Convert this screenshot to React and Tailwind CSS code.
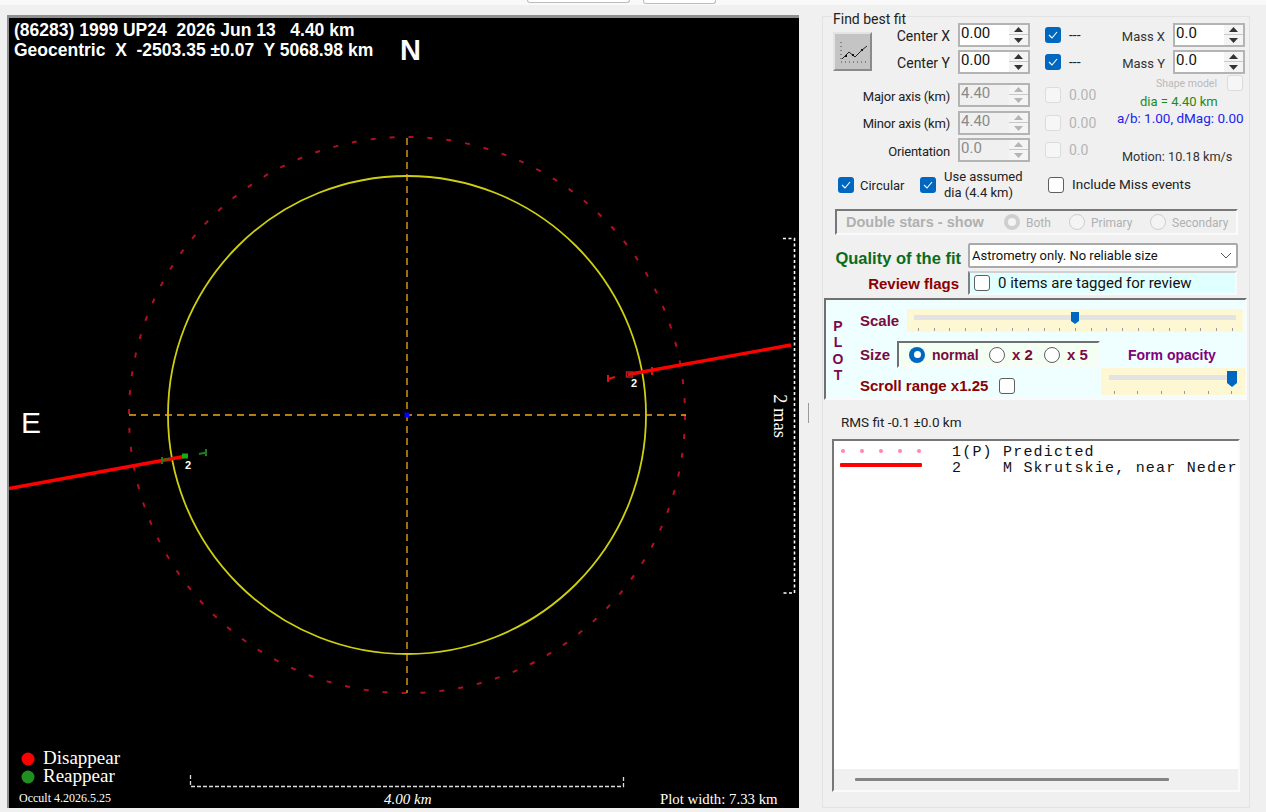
const UI = "font-['Roboto','Noto_Sans',sans-serif]"
const ARIAL = "font-['Liberation_Sans',Arial,sans-serif]"
const SERIF = "font-['Liberation_Serif','Times_New_Roman',serif]"

function Arrows({ disabled }) {
  const fill = disabled ? '#b5b5b5' : '#333'
  return (
    <div className="flex h-full w-[19px] shrink-0 flex-col items-center justify-center gap-[1px] bg-[#f4f4f4]">
      <div className="flex h-[10px] w-full items-center justify-center border-b border-[#c8c8c8]">
        <svg width="9" height="5" viewBox="0 0 9 5"><path d="M4.5 0 9 5H0z" fill={fill} /></svg>
      </div>
      <div className="flex h-[9px] w-full items-center justify-center">
        <svg width="9" height="5" viewBox="0 0 9 5"><path d="M4.5 5 9 0H0z" fill={fill} /></svg>
      </div>
    </div>
  )
}

function Spin({ value, disabled }) {
  return (
    <div className={`flex h-[24px] w-[72px] shrink-0 items-center border-2 border-[#b4b4b4] ${disabled ? 'bg-[#f0f0f0] text-[#8a8a8a]' : 'bg-white text-[#111]'}`}>
      <span className="-mt-[3px] flex-1 pl-[1px] text-[15px] leading-none">{value}</span>
      <Arrows disabled={disabled} />
    </div>
  )
}

function Check({ checked, disabled }) {
  if (checked) {
    return (
      <div className="flex h-[16px] w-[16px] shrink-0 items-center justify-center rounded-[3px] bg-[#0067c0]">
        <svg width="10" height="8" viewBox="0 0 10 8"><path d="M1 4l3 3 5-6" fill="none" stroke="#fff" strokeWidth="1.1" /></svg>
      </div>
    )
  }
  return <div className={`h-[16px] w-[16px] shrink-0 rounded-[3px] border ${disabled ? 'border-[#dcdcdc] bg-[#f6f6f6]' : 'border-[#5f5f5f] bg-white'}`} />
}

function Radio({ checked, disabled }) {
  if (checked && disabled) {
    return (
      <div className="flex h-[16px] w-[16px] shrink-0 items-center justify-center rounded-full bg-[#cfcfcf]">
        <div className="h-[8px] w-[8px] rounded-full bg-[#f4f4f4]" />
      </div>
    )
  }
  if (checked) {
    return (
      <div className="flex h-[16px] w-[16px] shrink-0 items-center justify-center rounded-full bg-[#0067c0]">
        <div className="h-[7px] w-[7px] rounded-full bg-white" />
      </div>
    )
  }
  return <div className={`h-[16px] w-[16px] shrink-0 rounded-full border ${disabled ? 'border-[#cfcfcf] bg-[#f4f4f4]' : 'border-[#5f5f5f] bg-white'}`} />
}

function SpinRow({ label, value, disabled, checked, note }) {
  return (
    <div className="flex h-[24px] items-center">
      <span className="mt-[2px] w-[127px] shrink-0 text-right text-[13px] leading-none tracking-[-0.2px] text-[#222]">{label}</span>
      <div className="ml-[8px]"><Spin value={value} disabled={disabled} /></div>
      <div className="ml-[15px]"><Check checked={checked} disabled={disabled} /></div>
      <span className={`ml-[8px] text-[14px] leading-none ${disabled ? 'text-[#b5b5b5]' : 'text-[#222]'}`}>{note}</span>
    </div>
  )
}

function Slider({ className, trackClass, thumbClass, ticks, tickClass, tall }) {
  return (
    <div className={`relative bg-[#fdf7d3] ${className}`}>
      <div className={`absolute h-[5px] bg-[#e3e3e3] ${trackClass}`} />
      <svg className={`absolute ${thumbClass}`} width={tall ? 10 : 8} height={tall ? 16 : 12} viewBox="0 0 8 12" preserveAspectRatio="none">
        <path d="M0 0h8v9l-4 3-4-3z" fill="#0067c0" />
      </svg>
      <div className={`absolute flex justify-between ${tickClass}`}>
        {Array.from({ length: ticks }).map((_, i) => <div key={i} className="h-[3px] w-[1px] bg-[#9a9a9a]" />)}
      </div>
    </div>
  )
}

function PlotCanvas() {
  return (
    <div className="relative h-[790px] w-[790px] bg-black">
      <svg className="absolute inset-0" width="790" height="790" viewBox="9 18 790 790">
        <circle cx="407" cy="415" r="278" fill="none" stroke="#b01020" strokeWidth="2" strokeDasharray="5 14" />
        <circle cx="407" cy="415" r="239" fill="none" stroke="#cfcf10" strokeWidth="1.8" />
        <path d="M407 138V693" stroke="#f0a81c" strokeWidth="1.3" strokeDasharray="7 5" />
        <path d="M129 415H686" stroke="#f0a81c" strokeWidth="1.3" strokeDasharray="7 5" />
        <rect x="404.500" y="412.500" width="5" height="5" fill="#0000ff" />
        <path d="M628 374.500 791 345" stroke="#f00" strokeWidth="3.4" />
        <path d="M9 488.500 184 456.500" stroke="#f00" strokeWidth="3.4" />
        <rect x="626.500" y="372" width="6" height="5" fill="none" stroke="#b02020" strokeWidth="1.500" />
        <path d="M652 367v8M608 375v7M608 379l7-2" stroke="#e01010" strokeWidth="2" fill="none" />
        <rect x="182" y="453.500" width="6" height="5" fill="#10b010" />
        <path d="M162 457v7M162 460l7-1M206 449v7M199 454l7-1.500" stroke="#1c7c1c" strokeWidth="2" fill="none" />
        <path d="M783 238.500h11.500V593H783" fill="none" stroke="#fff" strokeWidth="1.600" strokeDasharray="3 2.500" />
        <path d="M190.500 775v11.500H623.500V775" fill="none" stroke="#ddd" strokeWidth="1.300" strokeDasharray="4 2" />
        <circle cx="28" cy="759" r="6.500" fill="#f00" />
        <circle cx="28" cy="777" r="6.500" fill="#1f8f1f" />
      </svg>

      <div className={`absolute left-[5px] top-[2px] whitespace-pre text-[17.500px] font-bold leading-[20px] text-white ${ARIAL}`}>
        {'(86283) 1999 UP24  2026 Jun 13   4.40 km\nGeocentric  X  -2503.35 ±0.07  Y 5068.98 km'}
      </div>
      <div className={`absolute left-[391px] top-[16px] text-[29px] font-bold leading-[32px] text-white ${ARIAL}`}>N</div>
      <div className={`absolute left-[12px] top-[389px] text-[30px] leading-[32px] text-white ${ARIAL}`}>E</div>
      <div className={`absolute left-[176px] top-[440px] text-[11px] font-bold leading-[14px] text-white ${ARIAL}`}>2</div>
      <div className={`absolute left-[622px] top-[358px] text-[11px] font-bold leading-[14px] text-white ${ARIAL}`}>2</div>
      <div className={`absolute left-[749px] top-[388px] origin-center rotate-90 whitespace-nowrap text-[18.500px] leading-[20px] text-white ${SERIF}`}>2 mas</div>
      <div className={`absolute left-[34px] top-[731px] text-[19px] leading-[18px] text-white ${SERIF}`}>Disappear</div>
      <div className={`absolute left-[34px] top-[749px] text-[19px] leading-[18px] text-white ${SERIF}`}>Reappear</div>
      <div className={`absolute left-[10px] top-[773px] text-[12px] leading-[14px] text-white ${SERIF}`}>Occult 4.2026.5.25</div>
      <div className={`absolute left-[375px] top-[773px] text-[15px] italic leading-[16px] text-white ${SERIF}`}>4.00 km</div>
      <div className={`absolute left-[651px] top-[773px] text-[14.800px] leading-[16px] text-white ${SERIF}`}>Plot width: 7.33 km</div>
    </div>
  )
}

function FitControls() {
  return (
    <div className="flex pt-[6px]">
      <div className="w-[277px] shrink-0">
        <div className="flex">
          <button className="ml-[10px] mt-[9px] flex h-[39px] w-[39px] shrink-0 items-center justify-center border-2 border-b-[#8a8a8a] border-l-[#e4e4e4] border-r-[#8a8a8a] border-t-[#e4e4e4] bg-[#c4c4c4]">
            <svg width="31" height="31" viewBox="0 0 31 31">
              <path d="M4 6v20M4 26h27" stroke="#444" strokeWidth="1" strokeDasharray="1 3" fill="none" />
              <path d="M5 23l7-7 6 5 7-7 5-4" stroke="#222" strokeWidth="1" fill="none" />
              <path d="M8 19h2v2H8zM15 18h2v2h-2zM24 13h2v2h-2z" fill="#111" />
            </svg>
          </button>
          <div className="flex flex-col gap-[3px]">
            {['Center X', 'Center Y'].map(label => (
              <div key={label} className="flex h-[24px] items-center">
                <span className="mt-[2px] w-[78px] shrink-0 text-right text-[14px] leading-none text-[#222]">{label}</span>
                <div className="ml-[8px]"><Spin value="0.00" /></div>
                <div className="ml-[15px]"><Check checked /></div>
                <span className="ml-[8px] text-[14px] leading-none text-[#222]">---</span>
              </div>
            ))}
          </div>
        </div>
        <div className="mt-[9px] flex flex-col gap-[3.500px]">
          <SpinRow label="Major axis (km)" value="4.40" disabled note="0.00" />
          <SpinRow label="Minor axis (km)" value="4.40" disabled note="0.00" />
          <SpinRow label="Orientation" value="0.0" disabled note="0.0" />
        </div>
      </div>

      <div className="flex-1">
        <div className="flex flex-col gap-[3px]">
          {['Mass X', 'Mass Y'].map(label => (
            <div key={label} className="flex h-[24px] items-center">
              <span className="mt-[3px] w-[65px] shrink-0 text-right text-[13px] leading-none text-[#333]">{label}</span>
              <div className="ml-[8px]"><Spin value="0.0" /></div>
            </div>
          ))}
        </div>
        <div className="mt-[1px] flex h-[16px] items-center">
          <span className="mt-[2px] w-[117px] text-right text-[10.500px] leading-none text-[#b9b9b9]">Shape model</span>
          <div className="ml-[10px]"><Check disabled /></div>
        </div>
        <div className="ml-[40px] mt-[2px] h-[17px] text-[13px] leading-[17px] text-[#1a8a1a]">dia = 4.40 km</div>
        <div className="ml-[17px] h-[17px] whitespace-nowrap text-[13.500px] leading-[17px] text-[#2222ee]">a/b: 1.00, dMag: 0.00</div>
        <div className="ml-[22px] mt-[21px] h-[14px] whitespace-nowrap text-[12.700px] leading-[17px] text-[#333]">Motion: 10.18 km/s</div>
      </div>
    </div>
  )
}

function DoubleStars() {
  return (
    <div className="ml-[12px] mt-[9px] flex h-[26px] w-[403px] items-center border-2 border-b-[#fafafa] border-l-[#777] border-r-[#fafafa] border-t-[#777] text-[#b0b0b0]">
      <span className={`ml-[9px] w-[148px] shrink-0 text-[14.500px] font-bold leading-none ${ARIAL}`}>Double stars - show</span>
      <div className="ml-[10px]"><Radio checked disabled /></div>
      <span className="ml-[6px] mt-[2px] w-[43px] text-[12px] leading-none">Both</span>
      <Radio disabled />
      <span className="ml-[6px] mt-[2px] w-[59px] text-[12px] leading-none">Primary</span>
      <Radio disabled />
      <span className="ml-[6px] mt-[2px] text-[12px] leading-none">Secondary</span>
    </div>
  )
}

function PlotPanel() {
  return (
    <div className={`ml-[1px] mt-[3px] flex h-[102px] w-[423px] border-2 border-b-[#fafafa] border-l-[#707070] border-r-[#fafafa] border-t-[#707070] bg-[#efffff] ${ARIAL}`}>
      <div className="ml-[7px] mt-[18px] flex w-[10px] flex-col items-center text-[14px] font-bold leading-[16.300px] text-[#7a0a55]">
        <span>P</span><span>L</span><span>O</span><span>T</span>
      </div>
      <div className="ml-[17px] flex-1">
        <div className="mt-[9px] flex h-[23px]">
          <span className="mt-[4px] w-[47px] text-[15px] font-bold leading-[16px] text-[#7a0a40]">Scale</span>
          <Slider className="h-[23px] w-[336px]" trackClass="left-[7px] top-[6px] w-[322px]" thumbClass="left-[164px] top-[3px]" ticks={21} tickClass="left-[11px] right-[10px] top-[19px]" />
        </div>
        <div className="mt-[9px] flex h-[27px] items-center">
          <span className="w-[37px] text-[15px] font-bold leading-[16px] text-[#7a0a40]">Size</span>
          <div className="flex h-[27px] w-[203px] items-center border-2 border-b-[#fafafa] border-l-[#707070] border-r-[#fafafa] border-t-[#707070] bg-[#f2fff2] text-[14px] font-bold leading-none text-[#7a0a40]">
            <div className="ml-[10px]"><Radio checked /></div>
            <span className="ml-[7px] w-[57px]">normal</span>
            <Radio />
            <span className="ml-[7px] w-[32px] text-[15px]">x 2</span>
            <Radio />
            <span className="ml-[7px] text-[15px]">x 5</span>
          </div>
          <span className="ml-[28px] whitespace-nowrap text-[14px] font-bold leading-[16px] text-[#800080]">Form opacity</span>
        </div>
        <div className="flex h-[27px]">
          <div className="flex w-[241px] items-center">
            <span className="mt-[9px] w-[139px] shrink-0 whitespace-nowrap text-[15px] font-bold leading-[16px] text-[#8b0000]">Scroll range x1.25</span>
            <div className="mt-[9px]"><Check /></div>
          </div>
          <Slider className="h-[27px] w-[144px]" trackClass="left-[8px] top-[7px] w-[127px]" thumbClass="left-[126px] top-[3px]" tall ticks={6} tickClass="left-[13px] right-[13px] top-[23px]" />
        </div>
      </div>
    </div>
  )
}

function ObserverList() {
  return (
    <div className="ml-[9px] mt-[7px] flex h-[353px] w-[408px] flex-col border-2 border-b-[#fafafa] border-l-[#777] border-r-[#fafafa] border-t-[#777] bg-[#f0f0f0]">
      <div className="flex-1 overflow-hidden bg-white font-['Liberation_Mono','Courier_New',monospace] text-[15px] leading-[16px] tracking-[1.200px] text-[#111]">
        <div className="ml-[6px] mt-[2px] flex">
          <div className="w-[112px] shrink-0">
            <div className="flex h-[16px] w-[82px] items-center justify-between px-[1px]">
              {[0, 1, 2, 3, 4].map(i => <div key={i} className="h-[4px] w-[4px] rounded-full bg-[#ff86b4]" />)}
            </div>
            <div className="mt-[4px] h-[4px] w-[82px] rounded-[1px] bg-[#f00]" />
          </div>
          <div className="mt-[2px] whitespace-pre">
            {'1(P) Predicted\n2    M Skrutskie, near Neder'}
          </div>
        </div>
      </div>
      <div className="flex h-[21px] shrink-0 items-center pl-[21px]">
        <div className="h-[3px] w-[314px] rounded-[1px] bg-[#858585]" />
      </div>
    </div>
  )
}

export default function App() {
  return (
    <div className={`flex h-[812px] w-[1266px] flex-col overflow-hidden bg-[#f0f0f0] ${UI}`}>
      <div className="flex h-[5px] shrink-0 items-start bg-[#f9f9f9]">
        <div className="ml-[527px] h-[3px] w-[103px] rounded-b-[3px] border border-t-0 border-[#bdbdbd] bg-white" />
        <div className="ml-[13px] h-[4px] w-[73px] rounded-b-[3px] border border-t-0 border-[#bdbdbd] bg-white" />
      </div>

      <div className="flex flex-1">
        {/* plot side */}
        <div className="ml-[7px] mt-[10px] h-[793px] w-[792px] shrink-0 border-l-2 border-t-[3px] border-l-[#8f8f8f] border-t-[#8f8f8f]">
          <PlotCanvas />
        </div>

        <div className="relative w-[23px] shrink-0">
          <div className="absolute left-[9px] top-[398px] h-[20px] w-[1px] bg-[#9a9a9a]" />
        </div>

        {/* fit panel */}
        <div className="relative mt-[11px] h-[792px] w-[428px] shrink-0 border border-[#e2e2e2] text-[#222]">
          <span className="absolute left-[9px] -top-[6px] bg-[#f0f0f0] px-[1px] text-[14px] leading-[16px] text-[#222]">Find best fit</span>
          <FitControls />

          <div className="ml-[15px] mt-[8px] flex h-[30px] items-center">
            <Check checked />
            <span className="ml-[6px] w-[60px] text-[13px] leading-none text-[#222]">Circular</span>
            <Check checked />
            <span className="ml-[8px] w-[104px] text-[13px] leading-[16px] text-[#222]">Use assumed<br />dia (4.4 km)</span>
            <Check />
            <span className="ml-[8px] text-[13.500px] leading-none text-[#222]">Include Miss events</span>
          </div>

          <DoubleStars />

          <div className="mt-[8px] flex h-[25px] items-center">
            <span className={`mt-[5px] w-[138px] text-right text-[16.500px] font-bold leading-none text-[#0b6b1a] ${ARIAL}`}>Quality of the fit</span>
            <div className="ml-[7px] flex h-[25px] w-[270px] items-center justify-between rounded-[2px] border-2 border-[#aaa] bg-white pl-[2px] pr-[4px] text-[13px] leading-none text-[#111]">
              <span>Astrometry only. No reliable size</span>
              <svg width="12" height="7" viewBox="0 0 12 7"><path d="M1 1l5 5 5-5" fill="none" stroke="#555" strokeWidth="1" /></svg>
            </div>
          </div>

          <div className="mt-[3px] flex h-[24px] items-center">
            <span className={`w-[136px] text-right text-[15px] font-bold leading-none text-[#8b0000] ${ARIAL}`}>Review flags</span>
            <div className="ml-[9px] flex h-[24px] w-[269px] items-center border-2 border-b-[#fafafa] border-l-[#808080] border-r-[#fafafa] border-t-[#d0d0d0] bg-[#e0ffff] pl-[4px] text-[15px] leading-none text-[#111]">
              <Check />
              <span className="ml-[8px]">0 items are tagged for review</span>
            </div>
          </div>

          <PlotPanel />

          <div className="ml-[18px] mt-[12px] h-[20px] text-[13.500px] leading-[20px] text-[#222]">RMS fit -0.1 ±0.0 km</div>

          <ObserverList />
        </div>
      </div>
    </div>
  )
}
